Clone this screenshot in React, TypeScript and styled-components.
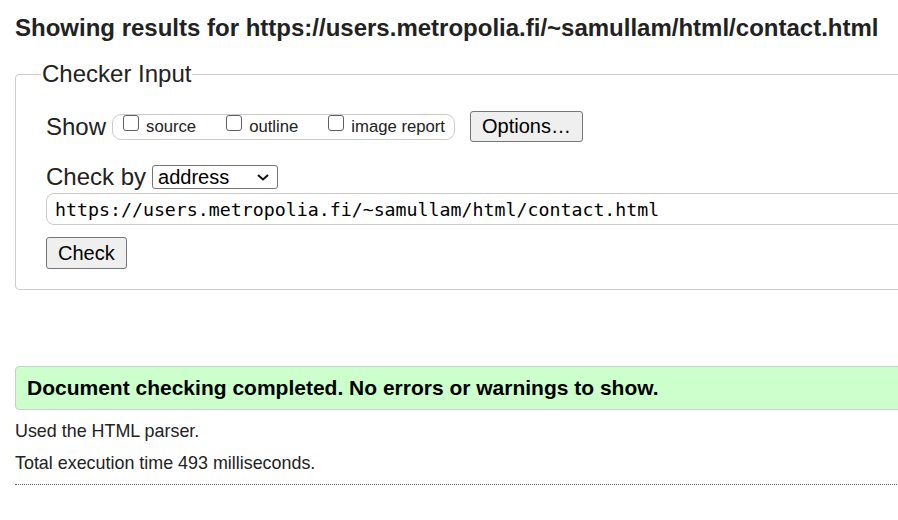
import React from 'react';
import styled, { createGlobalStyle } from 'styled-components';

const GlobalStyle = createGlobalStyle`
	html, body {
		margin: 0;
		padding: 0;
		overflow: hidden;
		background: #fff;
	}
	body {
		font-family: 'Liberation Sans', Arial, sans-serif;
		color: #222;
	}
`;

const Page = styled.div`
	width: 1100px;
	padding: 13px 15px 0 15px;
`;

const Title = styled.h2`
	margin: 0 0 17px 0;
	font-size: 24px;
	font-weight: bold;
	line-height: 30px;
	color: #222;
`;

const Fieldset = styled.fieldset`
	margin: 0;
	padding: 0 30px 20px 30px;
	border: 1px solid #ccc;
	border-radius: 4px;
	min-width: 0;
`;

const Legend = styled.legend`
	font-size: 24px;
	padding: 0 1px;
	margin-left: -5px;
	line-height: 28px;
`;

const Row = styled.div<{ gap?: number }>`
	display: flex;
	align-items: center;
	margin-top: ${(p) => p.gap ?? 0}px;
`;

const Label = styled.span`
	font-size: 24px;
	line-height: 28px;
	margin-right: 6px;
`;

const CheckGroup = styled.div`
	box-sizing: border-box;
	display: flex;
	align-items: center;
	height: 26px;
	padding: 0 9px 0 10px;
	border: 1px solid #ccc;
	border-radius: 9px;
	margin-right: 15px;
`;

const CheckItem = styled.label`
	display: flex;
	align-items: center;
	font-size: 16.7px;
	margin-right: 30px;
	&:last-child {
		margin-right: 0;
	}
`;

const CheckBox = styled.input`
	appearance: none;
	box-sizing: border-box;
	margin: 0 7px 8px 0;
	width: 16px;
	height: 16px;
	border: 1.5px solid #5f5f5f;
	border-radius: 3px;
	background: #fff;
`;

const Button = styled.button<{ tall?: boolean }>`
	font-family: 'Liberation Sans', Arial, sans-serif;
	font-size: 20px;
	color: #000;
	background: #efefef;
	border: 1px solid #767676;
	border-radius: 3px;
	padding: 2px 11px;
	line-height: ${(p) => (p.tall ? 26 : 25)}px;
`;

const SelectWrap = styled.div`
	position: relative;
	display: inline-flex;
`;

const Select = styled.select`
	appearance: none;
	font-family: 'Liberation Sans', Arial, sans-serif;
	font-size: 20px;
	color: #000;
	width: 126px;
	height: 24px;
	border: 1px solid #767676;
	border-radius: 3px;
	padding: 0 5px;
	background: #fff;
	line-height: 22px;
`;

const Chevron = styled.svg`
	position: absolute;
	right: 9px;
	top: 9px;
	pointer-events: none;
`;

const UrlInput = styled.input`
	display: block;
	box-sizing: border-box;
	width: 100%;
	height: 32px;
	margin-top: 2px;
	padding: 0 8px;
	font-family: 'DejaVu Sans Mono', 'Liberation Mono', monospace;
	font-size: 18.25px;
	color: #000;
	border: 1px solid #ccc;
	border-radius: 8px;
	outline: none;
`;

const Status = styled.div`
	margin: 76px 0 5px 0;
	padding: 9px 11px;
	background: #ccffcc;
	border: 1px solid #ccc;
	border-radius: 4px;
	font-size: 21px;
	font-weight: bold;
	color: #000;
	line-height: 24px;
`;

const Info = styled.p`
	margin: 0;
	font-size: 17.9px;
	line-height: 32px;
	color: #222;
`;

const Divider = styled.hr`
	margin: 5px 0 0 0;
	border: none;
	border-top: 1px dotted #666;
`;

const App: React.FC = () => {
	const url = 'https://users.metropolia.fi/~samullam/html/contact.html';

	return (
		<Page>
			<GlobalStyle />
			<Title>Showing results for {url}</Title>
			<Fieldset>
				<Legend>Checker Input</Legend>
				<Row gap={23}>
					<Label>Show</Label>
					<CheckGroup>
						<CheckItem>
							<CheckBox type="checkbox" />
							source
						</CheckItem>
						<CheckItem>
							<CheckBox type="checkbox" />
							outline
						</CheckItem>
						<CheckItem>
							<CheckBox type="checkbox" />
							image report
						</CheckItem>
					</CheckGroup>
					<Button>Options…</Button>
				</Row>
				<Row gap={21}>
					<Label>Check by</Label>
					<SelectWrap>
						<Select defaultValue="address">
							<option value="address">address</option>
							<option value="upload">file upload</option>
							<option value="text">text input</option>
						</Select>
						<Chevron width="12" height="7" viewBox="0 0 12 7">
							<path d="M1 1l5 4.5L11 1" fill="none" stroke="#111" strokeWidth="2" />
						</Chevron>
					</SelectWrap>
				</Row>
				<UrlInput defaultValue={url} />
				<Row gap={12}>
					<Button tall>Check</Button>
				</Row>
			</Fieldset>
			<Status>Document checking completed. No errors or warnings to show.</Status>
			<Info>Used the HTML parser.</Info>
			<Info>Total execution time 493 milliseconds.</Info>
			<Divider />
		</Page>
	);
};

export default App;
